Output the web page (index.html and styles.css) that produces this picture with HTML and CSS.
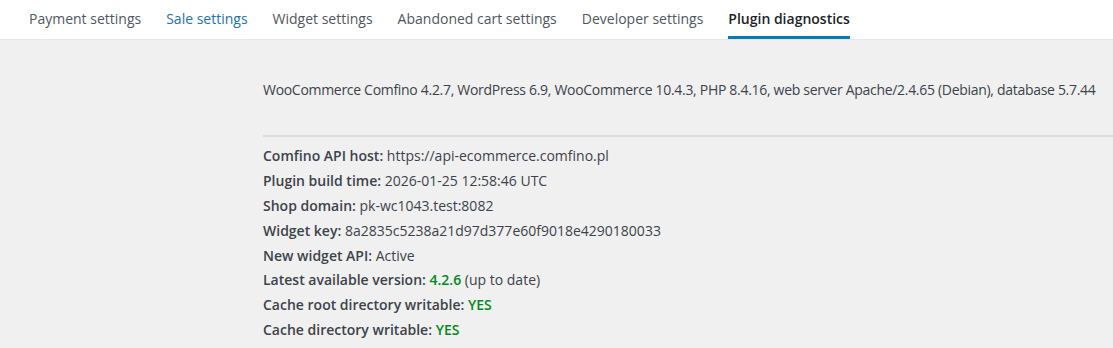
FILE: index.html
```html
<!DOCTYPE html>
<html lang="en">
<head>
  <meta charset="UTF-8" />
  <meta name="viewport" content="width=device-width, initial-scale=1.0" />
  <title>Comfino - Plugin diagnostics</title>
  <link rel="stylesheet" href="styles.css">
</head>
<body>
  <nav class="tabs">
    <a href="#" class="tab">Payment settings</a>
    <a href="#" class="tab link">Sale settings</a>
    <a href="#" class="tab">Widget settings</a>
    <a href="#" class="tab">Abandoned cart settings</a>
    <a href="#" class="tab">Developer settings</a>
    <a href="#" class="tab active">Plugin diagnostics</a>
  </nav>

  <div class="content">
    <p class="versions">WooCommerce Comfino 4.2.7, WordPress 6.9, WooCommerce 10.4.3, PHP 8.4.16, web server Apache/2.4.65 (Debian), database 5.7.44</p>
    <hr />
    <ul class="info">
      <li><b>Comfino API host:</b> https://api-ecommerce.comfino.pl</li>
      <li><b>Plugin build time:</b> 2026-01-25 12:58:46 UTC</li>
      <li><b>Shop domain:</b> pk-wc1043.test:8082</li>
      <li><b>Widget key:</b> 8a2835c5238a21d97d377e60f9018e4290180033</li>
      <li><b>New widget API:</b> Active</li>
      <li><b>Latest available version:</b> <b class="ok">4.2.6</b> (up to date)</li>
      <li><b>Cache root directory writable:</b> <b class="ok">YES</b></li>
      <li><b>Cache directory writable:</b> <b class="ok">YES</b></li>
    </ul>
  </div>
</body>
</html>
```

FILE: styles.css
```css
body {
  margin: 0;
  background: #f0f0f1;
  color: #3c434a;
  font-family: "Open Sans", "Noto Sans", sans-serif;
  font-size: 14px;
}

.tabs {
  display: flex;
  gap: 25px;
  height: 40px;
  padding-left: 29px;
  background: #fff;
  border-bottom: 1px solid #e6e6e6;
  box-sizing: border-box;
}

.tab {
  display: flex;
  align-items: center;
  height: 100%;
  box-sizing: border-box;
  border-bottom: 3px solid transparent;
  padding-top: 1px;
  color: #50575e;
  text-decoration: none;
  font-weight: 500;
}

.tab.link { color: #2271b1; }

.tab.active {
  color: #1d2327;
  font-weight: 600;
  border-bottom-color: #007cba;
}

.content {
  padding: 0 0 0 263px;
}

.versions {
  margin: 40px 0 0;
  line-height: 20px;
  white-space: nowrap;
  letter-spacing: -0.3px;
}

hr {
  margin: 35px 0 0;
  border: 0;
  border-top: 2px solid #dcdcde;
}

.info {
  list-style: none;
  margin: 9px 0 0;
  padding: 0;
}

.info li {
  line-height: 20px;
  margin-bottom: 4.9px;
}

.info b { font-weight: 600; }

.ok { color: #008a20; }
```
